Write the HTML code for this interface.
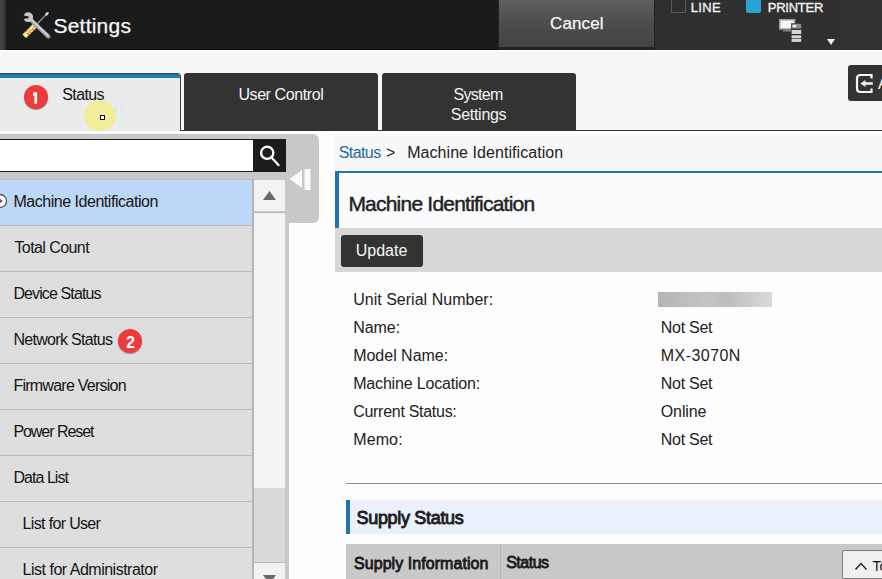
<!DOCTYPE html>
<html><head><meta charset="utf-8"><style>*{margin:0;padding:0;box-sizing:border-box}
html,body{width:882px;height:579px;overflow:hidden;background:#fbfbfb;font-family:"Liberation Sans",sans-serif;position:relative}
.a{position:absolute}
.t{position:absolute;white-space:nowrap}
</style></head><body>
<div class="a" style="left:0;top:0;width:882px;height:50px;background:#1b1b1b;border-bottom:1px solid #0e0e0e"></div>
<div class="a" style="left:0;top:0;width:6px;height:50px;background:linear-gradient(90deg,#474a48,#2e302f)"></div>
<svg class="a" style="left:18px;top:8px" width="36" height="34" viewBox="0 0 36 34">
<defs><mask id="wm"><rect width="36" height="34" fill="#fff"/><path d="M3.5 6.8 L10.6 8.4 L10.6 10.2 L3.5 11.2 Z" fill="#000"/></mask></defs>
<line x1="28.6" y1="6.2" x2="18.5" y2="16.5" stroke="#a0a0a0" stroke-width="1.1"/>
<ellipse cx="28.9" cy="5.9" rx="2.3" ry="1.3" transform="rotate(-45 28.9 5.9)" fill="#dcdcdc"/>
<line x1="18.6" y1="16" x2="6.2" y2="28.4" stroke="#bdb862" stroke-width="5.4" stroke-linecap="butt"/>
<line x1="18.4" y1="16.2" x2="6.4" y2="28.2" stroke="#f2ee98" stroke-width="4" stroke-linecap="butt"/>
<g fill="#e5312b"><circle cx="10.6" cy="20.8" r=".7"/><circle cx="8.7" cy="22.7" r=".7"/><circle cx="15.8" cy="19.2" r=".7"/><circle cx="14.6" cy="21.2" r=".7"/><circle cx="12.9" cy="22.6" r=".7"/><circle cx="11.2" cy="24" r=".7"/><circle cx="9.4" cy="25.4" r=".7"/><circle cx="13" cy="24.6" r=".7"/><circle cx="10.6" cy="26.4" r=".7"/></g>
<line x1="13" y1="12" x2="30.4" y2="28.6" stroke="#9c9c9c" stroke-width="4.2" stroke-linecap="round"/>
<line x1="13" y1="11.4" x2="30" y2="27.6" stroke="#d6d6d6" stroke-width="1.5" stroke-linecap="round"/>
<circle cx="10.2" cy="9.2" r="4.9" fill="#c8c8c8" mask="url(#wm)"/>
</svg>
<div class="t" style="left:53.50px;top:15px;font-size:21px;line-height:21px;color:#f6f6f6;font-weight:400;letter-spacing:0.214px;-webkit-text-stroke:0.25px #f6f6f6">Settings</div>
<div class="a" style="left:498px;top:0;width:157px;height:50px;background:#222"></div>
<div class="a" style="left:499px;top:0;width:155px;height:47px;background:linear-gradient(#5f5f5f,#4b4b4b 55%,#434343)"></div>
<div class="t" style="left:550.00px;top:15px;font-size:17px;line-height:17px;color:#f8f8f8;font-weight:400;letter-spacing:0.120px;-webkit-text-stroke:0.25px #f8f8f8">Cancel</div>
<div class="a" style="left:655px;top:0;width:186px;height:50px;background:#2f2f2f"></div>
<div class="a" style="left:841px;top:0;width:41px;height:50px;background:#323232"></div>
<div class="a" style="left:671px;top:-3px;width:15px;height:16px;border:1px solid #595959"></div>
<div class="t" style="left:690.70px;top:1px;font-size:13px;line-height:13px;color:#f2f2f2;font-weight:400;letter-spacing:0.367px;-webkit-text-stroke:0.35px #f2f2f2">LINE</div>
<div class="a" style="left:746px;top:-3px;width:15px;height:16px;background:#2aa4d3;border-radius:2px"></div>
<div class="t" style="left:767.70px;top:1px;font-size:13px;line-height:13px;color:#f2f2f2;font-weight:400;letter-spacing:-0.233px;-webkit-text-stroke:0.35px #f2f2f2">PRINTER</div>
<svg class="a" style="left:777px;top:17px" width="26" height="27" viewBox="0 0 26 27">
<rect x="2.7" y="2.7" width="15" height="9.3" fill="#f4f4f6" stroke="#9c9c9c" stroke-width="1.5"/>
<rect x="8.5" y="12" width="3" height="1.5" fill="#8a8a8a"/><rect x="6" y="13.3" width="8" height="1.2" fill="#8a8a8a"/>
<rect x="14" y="6.3" width="11" height="20" fill="#2f2f2f"/>
<rect x="14.6" y="6.8" width="9.6" height="4.8" fill="#8c8c8c"/><rect x="15.8" y="8" width="3.4" height="2.2" fill="#fff"/>
<rect x="14.6" y="13" width="9.6" height="4" fill="#d6d6d6"/>
<rect x="14.6" y="18.3" width="9.6" height="3" fill="#d6d6d6"/>
<rect x="14.6" y="22" width="9.6" height="2.9" fill="#d6d6d6"/>
</svg>
<svg class="a" style="left:826px;top:38px" width="10" height="8" viewBox="0 0 10 8"><path d="M1 1 L9 1 L5 7 Z" fill="#f2f2f2"/></svg>
<div class="a" style="left:0;top:50px;width:882px;height:81px;background:#f6f6f6;border-top:2px solid #fdfdfd"></div>
<div class="a" style="left:-14px;top:73px;width:195px;height:58px;background:#ebebeb;border-right:1px solid #3a3a3a;border-radius:0 4px 0 0;overflow:hidden"></div>
<div class="a" style="left:-14px;top:73px;width:194px;height:6px;border-radius:0 3px 0 0;background:linear-gradient(#1c4c6e 0,#1c4c6e 1px,#2a6da2 1px,#2a6da2 3px,#2e8ab9 3px,#2e8ab9 4px,#2670a6 4px,#2670a6 5px,#dff2f6 5px)"></div>
<div class="a" style="left:184px;top:73px;width:194px;height:58px;background:#333;border-radius:3px 3px 0 0"></div>
<div class="a" style="left:382px;top:73px;width:194px;height:58px;background:#333;border-radius:3px 3px 0 0"></div>
<div class="a" style="left:181px;top:130px;width:701px;height:1px;background:#333"></div>
<div class="t" style="left:62.30px;top:87px;font-size:16px;line-height:16px;color:#111;font-weight:400;letter-spacing:-0.640px;">Status</div>
<div class="t" style="left:238.40px;top:87px;font-size:16px;line-height:16px;color:#f4f4f4;font-weight:400;letter-spacing:-0.409px;">User Control</div>
<div class="t" style="left:453.50px;top:87px;font-size:16px;line-height:16px;color:#f4f4f4;font-weight:400;letter-spacing:-0.700px;">System</div>
<div class="t" style="left:450.80px;top:107px;font-size:16px;line-height:16px;color:#f4f4f4;font-weight:400;letter-spacing:-0.286px;">Settings</div>
<div class="a" style="left:24px;top:85px;width:24px;height:24px;border-radius:50%;background:#ee3b3b;box-shadow:0 1px 1px rgba(0,0,0,.35)"></div>
<svg class="a" style="left:30px;top:90px" width="10" height="16" viewBox="0 0 10 16"><path d="M4.4 2 L7.1 2 L7.1 13.8 L4.4 13.8 L4.4 5.2 L3 5.8 L3 3.3 Z" fill="#fff"/></svg>
<div class="a" style="left:115px;top:103px;width:3px;height:15px;background:rgba(214,230,250,.55)"></div>
<div class="a" style="left:120px;top:104px;width:3px;height:12px;background:rgba(214,230,250,.45)"></div>
<div class="a" style="left:124px;top:102px;width:2px;height:12px;background:rgba(214,230,250,.45)"></div>
<div class="a" style="left:84px;top:100px;width:32px;height:31px;border-radius:50%;background:#f1ed9a"></div>
<div class="a" style="left:100px;top:115px;width:5px;height:5px;border:1px solid #111;background:#fff"></div>
<div class="a" style="left:848px;top:65px;width:40px;height:36px;background:#333;border-radius:3px"></div>
<svg class="a" style="left:855px;top:73px" width="20" height="21" viewBox="0 0 20 21">
<path d="M16.5 5.5 L16.5 2 L5.5 2 Q2 2 2 5.5 L2 15.5 Q2 19 5.5 19 L16.5 19 L16.5 15.5" fill="none" stroke="#f6f6f6" stroke-width="2.2"/>
<path d="M5.5 10.5 L10.5 7 L10.5 9.2 L17.8 9.2 L17.8 11.8 L10.5 11.8 L10.5 14 Z" fill="#f6f6f6"/>
</svg>
<div class="t" style="left:878.00px;top:76px;font-size:16px;line-height:16px;color:#f4f4f4;font-weight:400;letter-spacing:0.000px;">A</div>
<div class="a" style="left:0;top:131px;width:882px;height:448px;background:#fdfdfd"></div>
<div class="a" style="left:-10px;top:134px;width:329px;height:89px;background:#c8c8c8;border-radius:0 6px 6px 0"></div>
<div class="a" style="left:-10px;top:134px;width:299px;height:445px;background:#c8c8c8"></div>
<div class="a" style="left:-2px;top:139px;width:256px;height:33px;background:#fff;border:1px solid #1e1e1e"></div>
<div class="a" style="left:253px;top:139px;width:33px;height:33px;background:#1c1c1c"></div>
<svg class="a" style="left:253px;top:139px" width="33" height="33" viewBox="0 0 33 33">
<circle cx="14.2" cy="13.8" r="6.1" fill="none" stroke="#fafafa" stroke-width="2.4"/>
<line x1="18.6" y1="18.4" x2="25.6" y2="26.2" stroke="#fafafa" stroke-width="2.2" stroke-linecap="round"/>
</svg>
<svg class="a" style="left:288px;top:168px" width="24" height="23" viewBox="0 0 24 23"><path d="M14 2 L14 20 L1.5 11 Z" fill="#fafafa"/><rect x="16.5" y="1" width="6" height="21" fill="#fafafa"/></svg>
<div class="a" style="left:-10px;top:179px;width:262px;height:46px;background:#bdd8f6;border-top:1px solid #b9b9b9"></div>
<div class="t" style="left:13.40px;top:194px;font-size:16px;line-height:16px;color:#151515;font-weight:400;letter-spacing:-0.467px;">Machine Identification</div>
<div class="a" style="left:-10px;top:225px;width:262px;height:46px;background:#dedede;border-top:1px solid #b9b9b9"></div>
<div class="t" style="left:14.40px;top:240px;font-size:16px;line-height:16px;color:#151515;font-weight:400;letter-spacing:-0.570px;">Total Count</div>
<div class="a" style="left:-10px;top:271px;width:262px;height:46px;background:#dedede;border-top:1px solid #b9b9b9"></div>
<div class="t" style="left:13.40px;top:286px;font-size:16px;line-height:16px;color:#151515;font-weight:400;letter-spacing:-0.883px;">Device Status</div>
<div class="a" style="left:-10px;top:317px;width:262px;height:46px;background:#dedede;border-top:1px solid #b9b9b9"></div>
<div class="t" style="left:13.40px;top:332px;font-size:16px;line-height:16px;color:#151515;font-weight:400;letter-spacing:-0.685px;">Network Status</div>
<div class="a" style="left:-10px;top:363px;width:262px;height:46px;background:#dedede;border-top:1px solid #b9b9b9"></div>
<div class="t" style="left:13.40px;top:378px;font-size:16px;line-height:16px;color:#151515;font-weight:400;letter-spacing:-0.753px;">Firmware Version</div>
<div class="a" style="left:-10px;top:409px;width:262px;height:46px;background:#dedede;border-top:1px solid #b9b9b9"></div>
<div class="t" style="left:13.40px;top:424px;font-size:16px;line-height:16px;color:#151515;font-weight:400;letter-spacing:-1.050px;">Power Reset</div>
<div class="a" style="left:-10px;top:455px;width:262px;height:46px;background:#dedede;border-top:1px solid #b9b9b9"></div>
<div class="t" style="left:13.40px;top:470px;font-size:16px;line-height:16px;color:#151515;font-weight:400;letter-spacing:-0.950px;">Data List</div>
<div class="a" style="left:-10px;top:501px;width:262px;height:46px;background:#dedede;border-top:1px solid #b9b9b9"></div>
<div class="t" style="left:22.60px;top:516px;font-size:16px;line-height:16px;color:#151515;font-weight:400;letter-spacing:-0.658px;">List for User</div>
<div class="a" style="left:-10px;top:547px;width:262px;height:46px;background:#dedede;border-top:1px solid #b9b9b9"></div>
<div class="t" style="left:22.60px;top:562px;font-size:16px;line-height:16px;color:#151515;font-weight:400;letter-spacing:-0.495px;">List for Administrator</div>
<svg class="a" style="left:-8px;top:193px" width="16" height="16" viewBox="0 0 16 16"><circle cx="8" cy="8" r="6.5" fill="#fff" stroke="#555" stroke-width="1.3"/><path d="M7 5 L11 8 L7 11 Z" fill="#666"/></svg>
<div class="a" style="left:118px;top:329px;width:24px;height:24px;border-radius:50%;background:#ee3b3b;box-shadow:0 1px 1px rgba(0,0,0,.35)"></div>
<div class="t" style="left:125.90px;top:335px;font-size:16px;line-height:16px;color:#fff;font-weight:700;letter-spacing:0.000px;">2</div>
<div class="a" style="left:252px;top:179px;width:2px;height:400px;background:#b4b4b4"></div>
<div class="a" style="left:254px;top:180px;width:31px;height:31px;background:#f2f2f2"></div>
<svg class="a" style="left:262px;top:190px" width="15" height="11" viewBox="0 0 15 11"><path d="M1 10 L7.5 1 L14 10 Z" fill="#6a6a6a"/></svg>
<div class="a" style="left:254px;top:212px;width:31px;height:1px;background:#b8b8b8"></div>
<div class="a" style="left:254px;top:213px;width:31px;height:275px;background:#f3f3f3"></div>
<div class="a" style="left:254px;top:488px;width:31px;height:74px;background:#dadada"></div>
<div class="a" style="left:254px;top:562px;width:31px;height:20px;background:#f2f2f2;border-top:1px solid #b8b8b8"></div>
<svg class="a" style="left:262px;top:574px" width="15" height="11" viewBox="0 0 15 11"><path d="M1 1 L7.5 10 L14 1 Z" fill="#6a6a6a"/></svg>
<div class="a" style="left:333px;top:134px;width:560px;height:37px;background:#f8f8f8"></div>
<div class="t" style="left:338.80px;top:145px;font-size:16px;line-height:16px;color:#1f69a6;font-weight:400;letter-spacing:-0.600px;">Status</div>
<div class="t" style="left:386.00px;top:145px;font-size:16px;line-height:16px;color:#222;font-weight:400;letter-spacing:0.000px;">&gt;</div>
<div class="t" style="left:407.20px;top:145px;font-size:16px;line-height:16px;color:#222;font-weight:400;letter-spacing:0.057px;">Machine Identification</div>
<div class="a" style="left:335px;top:171px;width:560px;height:58px;background:#fafbfc;border-top:2px solid #2373b3"></div>
<div class="a" style="left:335px;top:171px;width:4px;height:58px;background:#2373b3"></div>
<div class="t" style="left:348.40px;top:193px;font-size:21px;line-height:21px;color:#222;font-weight:400;letter-spacing:-0.781px;-webkit-text-stroke:0.45px #222">Machine Identification</div>
<div class="a" style="left:335px;top:228px;width:560px;height:44px;background:#d7d7d7"></div>
<div class="a" style="left:341px;top:235px;width:82px;height:32px;background:#333;border-radius:3px"></div>
<div class="t" style="left:355.70px;top:243px;font-size:16px;line-height:16px;color:#f8f8f8;font-weight:400;letter-spacing:0.000px;">Update</div>
<div class="t" style="left:353.20px;top:292px;font-size:16px;line-height:16px;color:#222;font-weight:400;letter-spacing:0.017px;">Unit Serial Number:</div>
<div class="t" style="left:353.20px;top:320px;font-size:16px;line-height:16px;color:#222;font-weight:400;letter-spacing:-0.050px;">Name:</div>
<div class="t" style="left:660.80px;top:320px;font-size:16px;line-height:16px;color:#222;font-weight:400;letter-spacing:-0.267px;">Not Set</div>
<div class="t" style="left:353.20px;top:348px;font-size:16px;line-height:16px;color:#222;font-weight:400;letter-spacing:-0.020px;">Model Name:</div>
<div class="t" style="left:660.80px;top:348px;font-size:16px;line-height:16px;color:#222;font-weight:400;letter-spacing:0.443px;">MX-3070N</div>
<div class="t" style="left:353.20px;top:376px;font-size:16px;line-height:16px;color:#222;font-weight:400;letter-spacing:-0.175px;">Machine Location:</div>
<div class="t" style="left:660.80px;top:376px;font-size:16px;line-height:16px;color:#222;font-weight:400;letter-spacing:-0.267px;">Not Set</div>
<div class="t" style="left:353.20px;top:404px;font-size:16px;line-height:16px;color:#222;font-weight:400;letter-spacing:-0.286px;">Current Status:</div>
<div class="t" style="left:660.80px;top:404px;font-size:16px;line-height:16px;color:#222;font-weight:400;letter-spacing:-0.120px;">Online</div>
<div class="t" style="left:353.20px;top:432px;font-size:16px;line-height:16px;color:#222;font-weight:400;letter-spacing:0.125px;">Memo:</div>
<div class="t" style="left:660.80px;top:432px;font-size:16px;line-height:16px;color:#222;font-weight:400;letter-spacing:-0.267px;">Not Set</div>
<div class="a" style="left:658px;top:292px;width:114px;height:15px;background:linear-gradient(90deg,#b5b5b5,#c4c4c4 45%,#bdbdbd 60%,#dadada)"></div>
<div class="a" style="left:346px;top:483px;width:540px;height:1px;background:#8c8c8c"></div>
<div class="a" style="left:346px;top:500px;width:540px;height:34px;background:#ebf1fb"></div>
<div class="a" style="left:346px;top:500px;width:4px;height:34px;background:#2373b3"></div>
<div class="t" style="left:356.50px;top:509px;font-size:18px;line-height:18px;color:#1e1e1e;font-weight:400;letter-spacing:-0.317px;-webkit-text-stroke:0.9px #1e1e1e">Supply Status</div>
<div class="a" style="left:346px;top:544px;width:540px;height:40px;background:#c9c9c9"></div>
<div class="a" style="left:500px;top:544px;width:1px;height:40px;background:#b5b5b5"></div>
<div class="t" style="left:354.00px;top:556px;font-size:16px;line-height:16px;color:#1a1a1a;font-weight:400;letter-spacing:0.059px;-webkit-text-stroke:0.8px #1a1a1a">Supply Information</div>
<div class="t" style="left:506.20px;top:555px;font-size:16px;line-height:16px;color:#1a1a1a;font-weight:400;letter-spacing:-0.500px;-webkit-text-stroke:0.8px #1a1a1a">Status</div>
<div class="a" style="left:842px;top:550px;width:50px;height:29px;background:#f0f0f0;border:1.5px solid #7c7c7c;border-radius:2px"></div>
<svg class="a" style="left:854px;top:561px" width="14" height="10" viewBox="0 0 14 10"><path d="M1.5 8.5 L7 2.5 L12.5 8.5" fill="none" stroke="#222" stroke-width="1.4"/></svg>
<div class="t" style="left:872.40px;top:559px;font-size:14px;line-height:14px;color:#111;font-weight:400;letter-spacing:0.000px;">To</div>
</body></html>
